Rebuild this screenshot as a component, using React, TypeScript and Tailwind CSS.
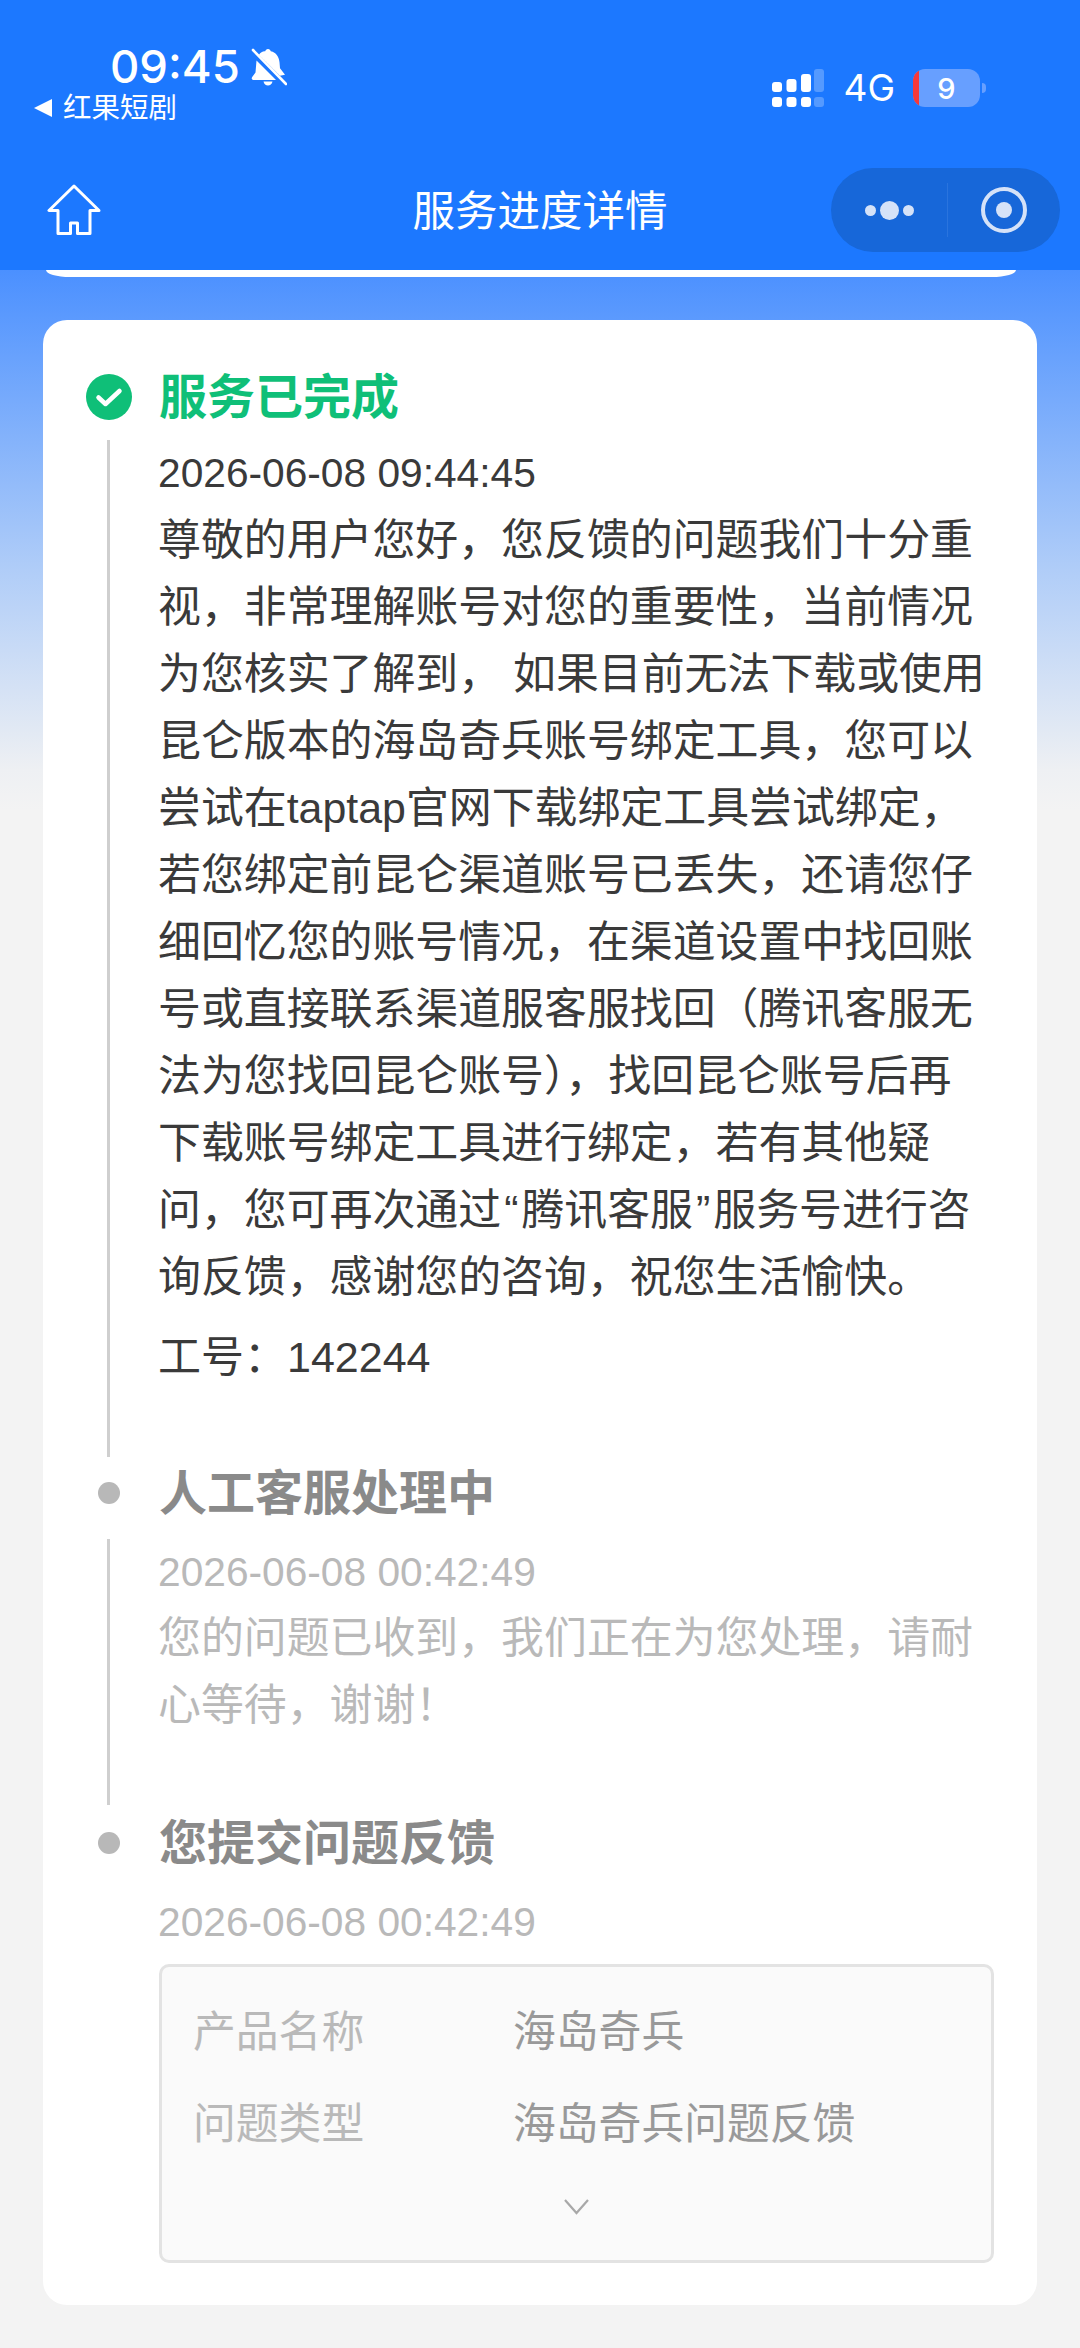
import { Fragment } from "react"

const fontStack = "font-['Liberation_Sans','Noto_Sans_CJK_SC',sans-serif]"

const replyLines = [
  "尊敬的用户您好，您反馈的问题我们十分重",
  "视，非常理解账号对您的重要性，当前情况",
  "为您核实了解到， 如果目前无法下载或使用",
  "昆仑版本的海岛奇兵账号绑定工具，您可以",
  "尝试在taptap官网下载绑定工具尝试绑定，",
  "若您绑定前昆仑渠道账号已丢失，还请您仔",
  "细回忆您的账号情况，在渠道设置中找回账",
  "号或直接联系渠道服客服找回（腾讯客服无",
  "法为您找回昆仑账号），找回昆仑账号后再",
  "下载账号绑定工具进行绑定，若有其他疑",
  "问，您可再次通过“腾讯客服”服务号进行咨",
  "询反馈，感谢您的咨询，祝您生活愉快。",
]

const pendingLines = [
  "您的问题已收到，我们正在为您处理，请耐",
  "心等待，谢谢！",
]

function TextLines({ lines }: { lines: string[] }) {
  return (
    <>
      {lines.map((line) => (
        <p key={line} className="h-[67px] whitespace-pre text-[42.9px] leading-[67px]">
          {/* 引号在这套字体里偏窄，左右补一点 */}
          {line.split(/([“”])/).map((part, i) =>
            part === "“" || part === "”" ? (
              <span key={i} className="px-[3px]">
                {part}
              </span>
            ) : (
              <Fragment key={i}>{part}</Fragment>
            )
          )}
        </p>
      ))}
    </>
  )
}

function StatusBar() {
  return (
    <div className="flex h-[168px] items-start justify-between">
      <div className="pl-[34px] pt-[44px]">
        <div className="flex items-center pl-[76px]">
          <span className="font-['Inter',sans-serif] text-[45.5px] font-medium leading-[46px] text-white">09:45</span>
          <svg className="ml-[11px]" width="36" height="38" viewBox="0 0 36 38">
            <path
              fill="#fff"
              d="M17 1c1.500 0 2.500 1 2.800 2.300 5.400 1.300 8.200 5.500 8.700 11l.5 6 5 6.500-5 1-21-21C9.500 4.300 12 3 14.200 3.300 14.500 2 15.500 1 17 1ZM5.500 12.500 25 32H2.500c-1.700 0-2.300-1.700-1.300-3l3.300-4.500ZM12.500 33.500h9c-.5 2.600-2.400 4-4.500 4s-4-1.400-4.500-4Z"
            />
            <path stroke="#fff" strokeWidth="2.600" strokeLinecap="round" d="M2 2l33 34" />
          </svg>
        </div>
        <div className="mt-[0px] flex items-center text-white">
          <svg width="18" height="20" viewBox="0 0 18 20">
            <path fill="#fff" d="M18 1v18L0 10Z" />
          </svg>
          <span className={`${fontStack} ml-[11px] text-[28.5px] leading-[36px]`}>红果短剧</span>
        </div>
      </div>
      <div className="flex items-center pr-[94px] pt-[69px]">
        <svg width="52" height="38" viewBox="0 0 52 38">
          <g fill="#fff">
            <rect x="0" y="13" width="10" height="10" rx="3" />
            <rect x="14.500" y="10" width="10" height="13" rx="3" />
            <rect x="29" y="5" width="10" height="18" rx="3" />
            <rect x="0" y="28" width="10" height="10" rx="3" />
            <rect x="14.500" y="28" width="10" height="10" rx="3" />
            <rect x="29" y="28" width="10" height="10" rx="3" />
          </g>
          <g fill="#fff" opacity="0.25">
            <rect x="42" y="0" width="10" height="23" rx="3" />
            <rect x="42" y="28" width="10" height="10" rx="3" />
          </g>
        </svg>
        <span className="ml-[19px] font-['Inter',sans-serif] text-[37px] leading-[38px] text-white">4G</span>
        <div className="relative ml-[18px] flex h-[38px] w-[67px] items-center justify-center overflow-hidden rounded-[12px] bg-[#679fff]">
          <span className="absolute bottom-0 left-0 top-0 w-[6px] bg-[#f5393a]" />
          <span className="font-['Inter',sans-serif] text-[29px] font-medium leading-none text-white">9</span>
        </div>
        <span className="ml-[2px] h-[10px] w-[4px] rounded-r-full bg-[#679fff]" />
      </div>
    </div>
  )
}

function NavBar() {
  return (
    <div className="grid h-[84px] grid-cols-[1fr_auto_1fr] items-center">
      <svg className="ml-[47px]" width="54" height="52" viewBox="0 0 54 52" fill="none">
        <path
          stroke="#fff"
          strokeWidth="3"
          strokeLinejoin="round"
          d="M27 2 2 26.500h9V49.500h12.500V39h7v10.500H43V26.500h9Z"
        />
      </svg>
      <h1 className={`${fontStack} mt-[3px] text-[42.5px] leading-[50px] text-white`}>服务进度详情</h1>
      <div className="mr-[20px] flex h-[84px] w-[229px] items-center justify-self-end rounded-full bg-[#1767d9]">
        <div className="flex h-full w-[116px] items-center justify-end gap-[4px] pr-[33px]">
          <span className="h-[11px] w-[11px] rounded-full bg-[#d5e2f8]" />
          <span className="h-[19px] w-[19px] rounded-full bg-[#d5e2f8]" />
          <span className="h-[11px] w-[11px] rounded-full bg-[#d5e2f8]" />
        </div>
        <div className="h-[54px] w-px bg-[#2a74de]" />
        <div className="flex flex-1 items-center justify-center">
          <div className="flex h-[46px] w-[46px] items-center justify-center rounded-full border-[4px] border-[#d5e2f8]">
            <span className="h-[16px] w-[16px] rounded-full bg-[#d5e2f8]" />
          </div>
        </div>
      </div>
    </div>
  )
}

function DoneIcon() {
  return (
    <svg width="46" height="46" viewBox="0 0 46 46">
      <circle cx="23" cy="23" r="23" fill="#0fbf78" />
      <path
        fill="none"
        stroke="#fff"
        strokeWidth="4.500"
        strokeLinecap="round"
        strokeLinejoin="round"
        d="M12.500 23.500 19.500 30 33.500 17"
      />
    </svg>
  )
}

function StepHeader({ title, active }: { title: string; active?: boolean }) {
  return (
    <div className="flex h-[60px] items-center">
      <div className="flex w-[46px] shrink-0 items-center justify-center">
        {active ? <DoneIcon /> : <span className="h-[22px] w-[22px] rounded-full bg-[#b8b8b8]" />}
      </div>
      <h2
        className={`ml-[27px] mt-[2px] text-[48px] font-bold leading-[60px] ${active ? "text-[#0fbf78]" : "text-[#8a8a8a]"}`}
      >
        {title}
      </h2>
    </div>
  )
}

export default function App() {
  return (
    <div className={`${fontStack} min-h-[2348px] w-[1080px] overflow-hidden bg-[#f3f3f3]`}>
      {/* 顶部导航 */}
      <header className="h-[270px] bg-[#1c78ff]">
        <StatusBar />
        <NavBar />
      </header>

      <main className="h-[2078px] bg-[linear-gradient(180deg,#4b90ff_0px,#b0cdf8_300px,#eef0f3_500px,#f3f3f3_540px)]">
        <div className="ml-[46px] h-[7px] w-[970px] rounded-bl-[24px_7px] rounded-br-[24px_7px] bg-white" />

        {/* 服务进度 */}
        <section className="ml-[43px] mt-[43px] h-[1985px] w-[994px] rounded-[24px] bg-white pl-[43px] pr-[43px] pt-[47px]">
          <StepHeader title="服务已完成" active />
          <div className="ml-[21px] mt-[16px] h-[1017px] border-l-[3px] border-[#cfcfcf] pl-[48px] text-[#3a3a3a]">
            <p className="mt-[-3px] h-[67px] text-[40.7px] leading-[67px]">2026-06-08 09:44:45</p>
            <TextLines lines={replyLines} />
            <p className="mt-[13px] h-[67px] text-[43px] leading-[67px]">工号：142244</p>
          </div>

          <div className="mt-[6px]">
            <StepHeader title="人工客服处理中" />
          </div>
          <div className="ml-[21px] mt-[16px] h-[266px] border-l-[3px] border-[#cfcfcf] pl-[48px] text-[#b9b9b9]">
            <p className="h-[66px] text-[40.7px] leading-[67px]">2026-06-08 00:42:49</p>
            <TextLines lines={pendingLines} />
          </div>

          <div className="mt-[8px]">
            <StepHeader title="您提交问题反馈" />
          </div>
          <div className="ml-[72px] mt-[16px] text-[#b9b9b9]">
            <p className="h-[67px] text-[40.7px] leading-[67px]">2026-06-08 00:42:49</p>
            <div className="ml-[1px] mt-[8px] flex h-[299px] w-[835px] flex-col rounded-[10px] border-[3px] border-[#e3e3e3] bg-[#fafafa] pl-[31px] pt-[35px]">
              <div className="flex h-[60px] items-center text-[42.8px]">
                <span className="w-[320px]">产品名称</span>
                <span className="text-[#999]">海岛奇兵</span>
              </div>
              <div className="mt-[32px] flex h-[60px] items-center text-[42.8px]">
                <span className="w-[320px]">问题类型</span>
                <span className="text-[#999]">海岛奇兵问题反馈</span>
              </div>
              <div className="mt-[44px] flex justify-center pr-[31px]">
                <svg width="27" height="17" viewBox="0 0 27 17" fill="none">
                  <path stroke="#a8a8a8" strokeWidth="2.200" d="M2 2l11.500 13L25 2" />
                </svg>
              </div>
            </div>
          </div>
        </section>
      </main>
    </div>
  )
}
